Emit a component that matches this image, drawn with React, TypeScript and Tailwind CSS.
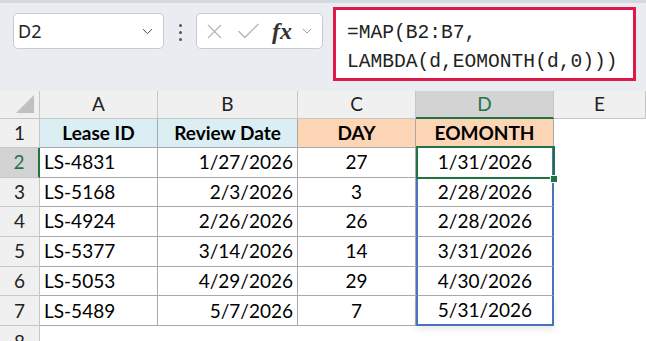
import { X, Check, ChevronDown } from 'lucide-react';

const rows = [
  { id: 'LS-4831', date: '1/27/2026', day: 27, eom: '1/31/2026' },
  { id: 'LS-5168', date: '2/3/2026', day: 3, eom: '2/28/2026' },
  { id: 'LS-4924', date: '2/26/2026', day: 26, eom: '2/28/2026' },
  { id: 'LS-5377', date: '3/14/2026', day: 14, eom: '3/31/2026' },
  { id: 'LS-5053', date: '4/29/2026', day: 29, eom: '4/30/2026' },
  { id: 'LS-5489', date: '5/7/2026', day: 7, eom: '5/31/2026' },
];

const cols = ['A', 'B', 'C', 'D', 'E'];

const FormulaBar = () => (
  <div className="relative h-[91px] bg-[#e9edf1] flex items-start">
    <div className="absolute top-0 left-0 right-0 h-[3px] bg-[#d5d8dc]" />
    <div className="mt-[13px] ml-[13px] w-[151px] h-[36px] bg-white border border-[#c9cbce] rounded-[5px] flex items-center justify-between pl-[4px] pr-[7px]">
      <span className="text-[18px] text-[#222] font-['Noto_Sans',sans-serif]">D2</span>
      <ChevronDown className="w-[17px] h-[17px] text-[#444]" strokeWidth={1.4} />
    </div>
    <div className="mt-[24px] ml-[15px] w-[3px] flex flex-col gap-[4px]">
      <div className="w-[3px] h-[3px] bg-[#555] rounded-full" />
      <div className="w-[3px] h-[3px] bg-[#555] rounded-full" />
      <div className="w-[3px] h-[3px] bg-[#555] rounded-full" />
    </div>
    <div className="mt-[13px] ml-[14px] w-[127px] h-[36px] bg-white border border-[#c9cbce] rounded-[5px] flex items-center pl-[5px]">
      <X className="w-[25px] h-[25px] text-[#b4b4b4]" strokeWidth={1.1} />
      <Check className="w-[29px] h-[29px] text-[#b4b4b4] ml-[7px]" strokeWidth={1.1} />
      <span className="ml-[9px] text-[24px] italic font-semibold text-[#333] font-['Liberation_Serif',serif] leading-none">fx</span>
      <ChevronDown className="w-[16px] h-[16px] text-[#999] ml-[7px]" strokeWidth={1.4} />
    </div>
    <div className="mt-[7px] ml-[10px] w-[303px] h-[74px] bg-white border-[3px] border-[#e0194b] pl-[11px] pt-[9px]">
      <div className="font-['Liberation_Mono',monospace] text-[19.6px] leading-[28.5px] text-[#222] whitespace-pre">
        =MAP(B2:B7,{'\n'}LAMBDA(d,EOMONTH(d,0)))
      </div>
    </div>
  </div>
);

const cell = "border-r border-b border-[#a9a9a9] flex items-center text-[19px] text-black font-['Lato',sans-serif]";

const Sheet = () => (
  <div className="grid grid-cols-[40px_118px_140px_118px_138px_1fr] grid-rows-[28px_29px_repeat(6,29.7px)_30px] font-['Lato',sans-serif]">
    <div className="bg-[#f0f0f0] border-r border-b border-[#c6c6c6] relative">
      <div className="absolute right-[5px] bottom-[5px] w-0 h-0 border-l-[18px] border-l-transparent border-b-[18px] border-b-[#c0c0c0]" />
    </div>
    {cols.map((c) =>
      c === 'D' ? (
        <div key={c} className="bg-[#d3d3d3] border-r border-[#c6c6c6] border-b-2 border-b-[#217346] flex items-center justify-center text-[19px] text-[#217346]">
          {c}
        </div>
      ) : (
        <div key={c} className="bg-[#f0f0f0] border-r border-b border-[#c6c6c6] flex items-center justify-center text-[19px] text-[#222]">
          {c}
        </div>
      )
    )}

    <div className="bg-[#f0f0f0] border-r border-b border-[#c6c6c6] flex items-center justify-center text-[19px] text-[#222]">1</div>
    <div className={`${cell} bg-[#dbeef4] justify-center font-bold`}>Lease ID</div>
    <div className={`${cell} bg-[#dbeef4] justify-center font-bold`}>Review Date</div>
    <div className={`${cell} bg-[#fcd5b4] justify-center font-bold`}>DAY</div>
    <div className={`${cell} bg-[#fcd5b4] justify-center font-bold`}>EOMONTH</div>
    <div className="bg-white" />

    {rows.map((r, i) => {
      const first = i === 0;
      const last = i === rows.length - 1;
      return [
        <div
          key={`h${i}`}
          className={
            first
              ? 'bg-[#d3d3d3] border-r-2 border-r-[#217346] border-b border-[#c6c6c6] flex items-center justify-center text-[19px] text-[#217346]'
              : 'bg-[#f0f0f0] border-r border-b border-[#c6c6c6] flex items-center justify-center text-[19px] text-[#222]'
          }
        >
          {i + 2}
        </div>,
        <div key={`a${i}`} className={`${cell} pl-[4px]`}>{r.id}</div>,
        <div key={`b${i}`} className={`${cell} justify-end pr-[4px]`}>{r.date}</div>,
        <div key={`c${i}`} className={`${cell} justify-center`}>{r.day}</div>,
        <div
          key={`d${i}`}
          className={`${cell} justify-center relative border-l-2 border-l-[#4a72c0] border-r-2 border-r-[#4a72c0] ${first ? 'z-10' : ''} ${last ? 'border-b-2 border-b-[#4a72c0] shadow-[0_4px_6px_rgba(0,0,0,0.08)]' : ''}`}
        >
          {r.eom}
          {first && (
            <>
              <div className="absolute -left-[2px] -top-[2px] -right-[3px] -bottom-[2px] border-2 border-[#217346]" />
              <div className="absolute -right-[6px] -bottom-[6px] w-[8px] h-[8px] bg-[#217346] border border-white" />
            </>
          )}
        </div>,
        <div key={`e${i}`} className="bg-white" />,
      ];
    })}

    <div className="bg-[#f0f0f0] border-r border-[#c6c6c6] flex justify-center pt-[4px] text-[19px] leading-[24px] text-[#222]">8</div>
    <div className="col-span-5 bg-white" />
  </div>
);

export default function App() {
  return (
    <div className="w-[646px] h-[341px] overflow-hidden bg-white">
      <FormulaBar />
      <Sheet />
    </div>
  );
}
